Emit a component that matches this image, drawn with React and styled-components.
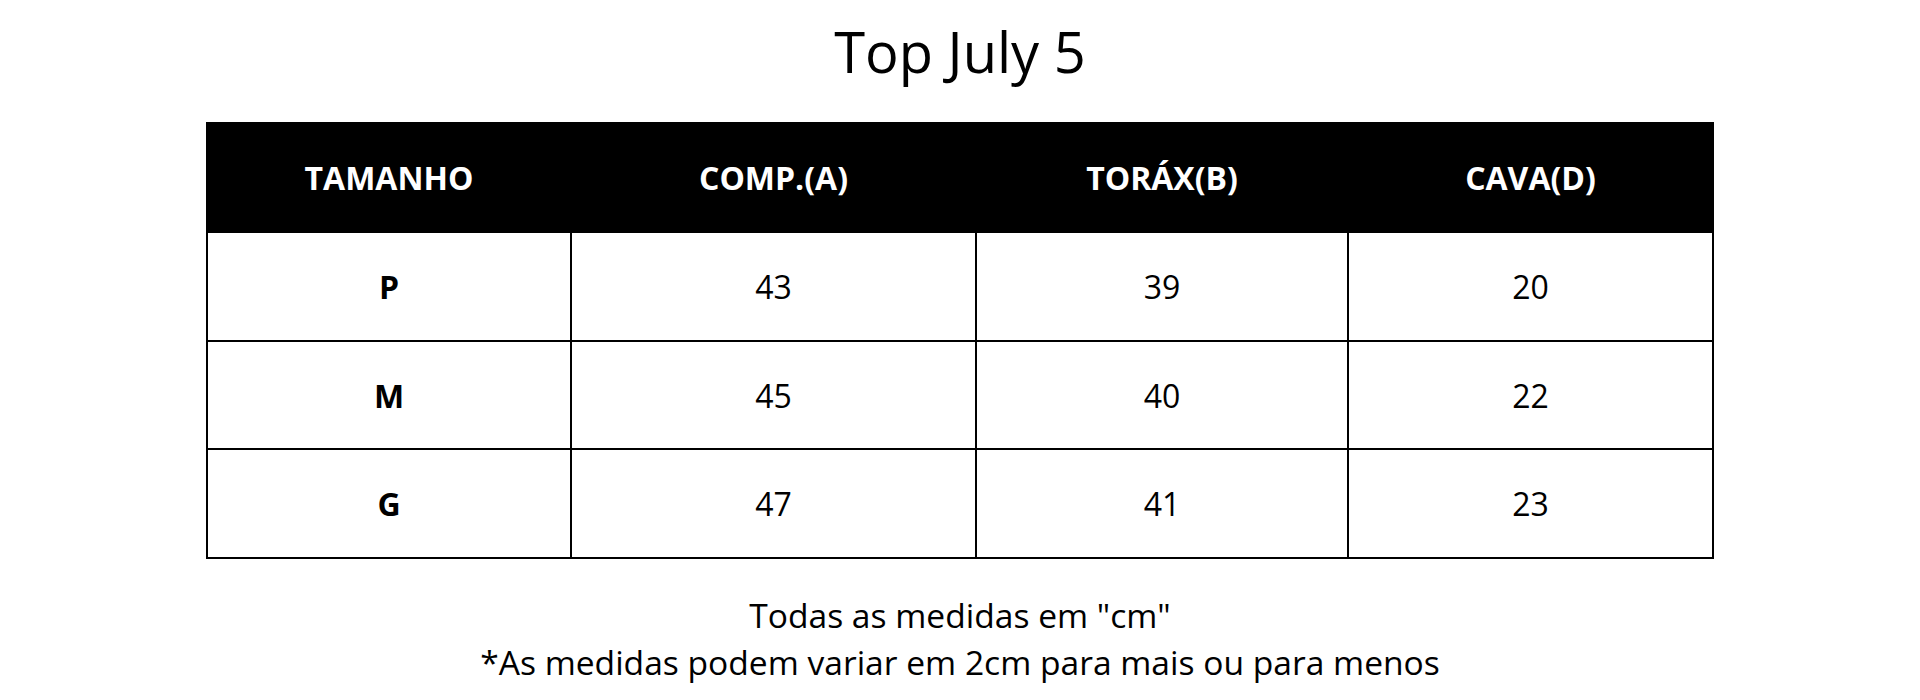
import styled, { createGlobalStyle } from 'styled-components'

const GlobalStyle = createGlobalStyle`
  body {
    margin: 0;
    background: #fff;
    font-family: "Open Sans", "Liberation Sans", sans-serif;
    color: #000;
  }
`

const Page = styled.main`
  display: flex;
  flex-direction: column;
  align-items: center;
  padding-top: 13px;
`

const Title = styled.h1`
  font-size: 56px;
  font-weight: 400;
  line-height: normal;
  margin: 0 0 33px 0;
`

const Table = styled.table`
  width: 1506px;
  table-layout: fixed;
  border-collapse: collapse;
  border: 2px solid #000;
`

const HeadCell = styled.th`
  height: 107px;
  padding: 0;
  background: #000;
  color: #fff;
  font-size: 32px;
  font-weight: 700;
  text-align: center;
  border: 2px solid #000;
`

const Cell = styled.td`
  height: 106.7px;
  padding: 0;
  font-size: 32px;
  font-weight: ${(p) => (p.$bold ? 700 : 400)};
  text-align: center;
  border: 2px solid #000;
`

const Notes = styled.div`
  margin-top: 33px;
  text-align: center;
  font-size: 33.6px;
  line-height: 47px;
`

const columns = [
  { label: 'TAMANHO', width: 364 },
  { label: 'COMP.(A)', width: 405 },
  { label: 'TORÁX(B)', width: 372 },
  { label: 'CAVA(D)', width: 365 },
]

const rows = [
  ['P', '43', '39', '20'],
  ['M', '45', '40', '22'],
  ['G', '47', '41', '23'],
]

export default function App() {
  return (
    <>
      <GlobalStyle />
      <Page>
        <Title>Top July 5</Title>
        <Table>
          <colgroup>
            {columns.map((c) => (
              <col key={c.label} style={{ width: c.width }} />
            ))}
          </colgroup>
          <thead>
            <tr>
              {columns.map((c) => (
                <HeadCell key={c.label}>{c.label}</HeadCell>
              ))}
            </tr>
          </thead>
          <tbody>
            {rows.map((r) => (
              <tr key={r[0]}>
                {r.map((v, i) => (
                  <Cell key={i} $bold={i === 0}>{v}</Cell>
                ))}
              </tr>
            ))}
          </tbody>
        </Table>
        <Notes>
          <div>Todas as medidas em "cm"</div>
          <div>*As medidas podem variar em 2cm para mais ou para menos</div>
        </Notes>
      </Page>
    </>
  )
}
